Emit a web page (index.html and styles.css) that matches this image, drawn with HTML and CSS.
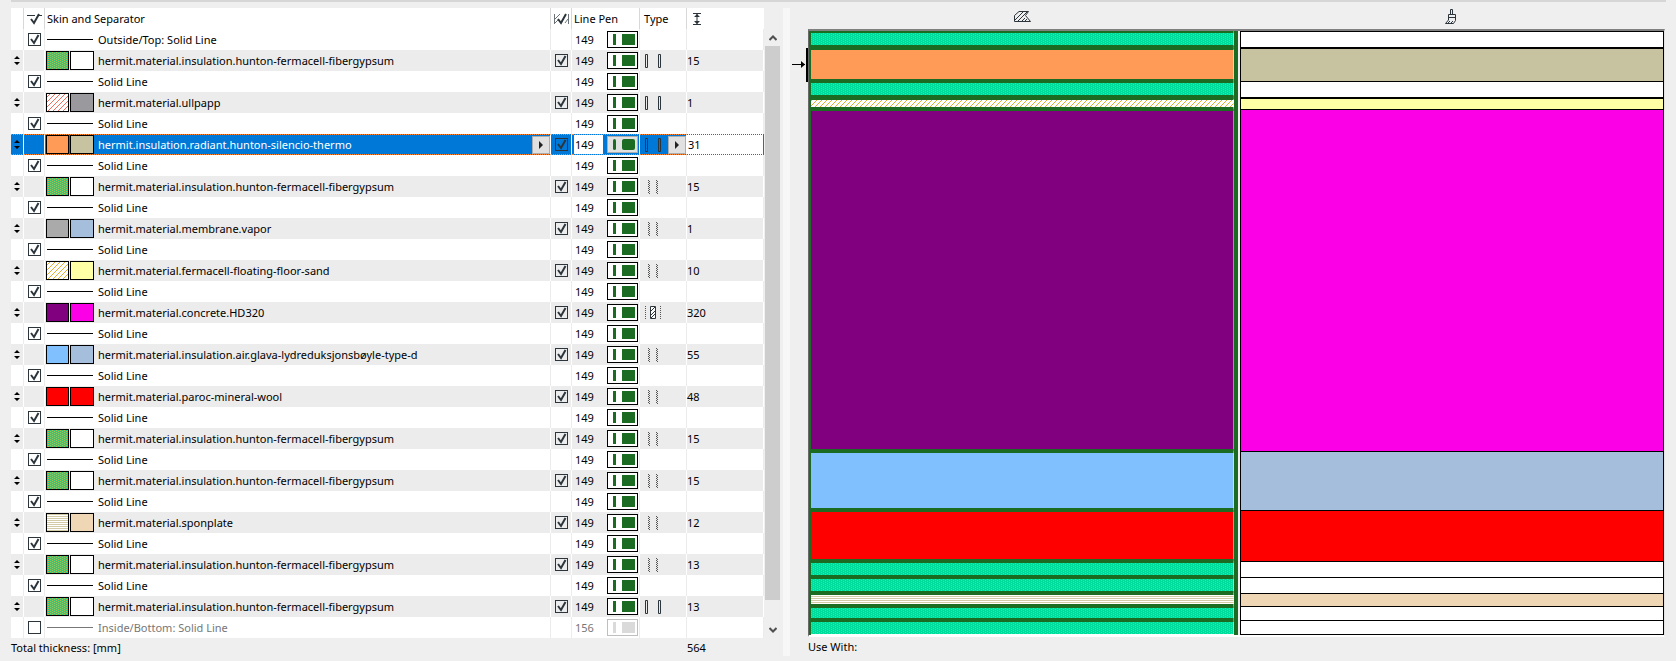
FILE: index.html
```html
<!DOCTYPE html>
<html lang="en">
<head>
    <meta charset="UTF-8">
    <meta name="viewport" content="width=device-width, initial-scale=1.0">
    <title>Composite Structures</title>
    <link rel="stylesheet" href="styles.css">
</head>
<body>
    <div class="divider"></div>
    <main class="editor">
        <section class="skins">
            <div class="list">
                <table class="skin-table">
                    <colgroup>
                        <col class="col-drag">
                        <col class="col-check">
                        <col>
                        <col class="col-end">
                        <col class="col-pen">
                        <col class="col-type">
                        <col class="col-thick">
                    </colgroup>
                    <thead>
                        <tr>
                            <th></th>
                            <th>
                                <svg width="15" height="12" viewBox="0 0 15 12" role="img" aria-label="Show separator"><path d="M0 2.5h8M12 2.5h3" stroke="#2b353b"/><path d="M4 6l3 4 5-9" fill="none" stroke="#2b353b" stroke-width="2"/></svg>
                            </th>
                            <th class="left">Skin and Separator</th>
                            <th>
                                <svg width="15" height="12" viewBox="0 0 15 12" role="img" aria-label="End faces"><path d="M.5 1v10M14.5 1v10M1 6l5-5M1 10l3-3M11 10l3-4" stroke="#6b7378" fill="none"/><path d="M4 6l3 4 5-9" fill="none" stroke="#2b353b" stroke-width="2"/></svg>
                            </th>
                            <th class="left">Line Pen</th>
                            <th class="left head-type">Type</th>
                            <th class="left head-thick">
                                <svg width="8" height="12" viewBox="0 0 8 12" role="img" aria-label="Thickness"><path d="M0 .5h8M0 11.5h8M4 1v10" stroke="#2b353b"/><path d="M4 1l3 3H1zM4 11l3-3H1z" fill="#2b353b"/></svg>
                            </th>
                        </tr>
                    </thead>
                    <tbody id="rows"></tbody>
                </table>
                <div class="scrollbar">
                    <button aria-label="Scroll up"><svg width="8" height="6" viewBox="0 0 8 6"><path d="M.5 5L4 1.500 7.500 5" fill="none" stroke="#505050" stroke-width="2"/></svg></button>
                    <div class="thumb"></div>
                    <button aria-label="Scroll down"><svg width="8" height="6" viewBox="0 0 8 6"><path d="M.5 1L4 4.500 7.500 1" fill="none" stroke="#505050" stroke-width="2"/></svg></button>
                </div>
            </div>
            <div class="total">
                <span>Total thickness: [mm]</span>
                <output id="total"></output>
            </div>
        </section>
        <div class="splitter"></div>
        <section class="preview">
            <div class="preview-head">
                <svg width="17" height="11" viewBox="0 0 17 11" role="img" aria-label="Cut fill"><path d="M5 .5h9.500l-3 4 5 6H.5v-6z" fill="none" stroke="#2b353b"/><path d="M1 9l8-8M4 10l9-9M8 10l3-3M11 10l2-2" stroke="#2b353b"/></svg>
                <svg width="12" height="15" viewBox="0 0 12 15" role="img" aria-label="Surface"><path d="M5.500 5V.5h2V5M3.500 11V5.500h7v6l-2 3H.5l3-3.500M3.500 8.500h7M3 14l2-2M6 14l2-2" fill="none" stroke="#2b353b"/></svg>
            </div>
            <div class="canvas">
                <svg class="section" id="cut" role="img" aria-label="Cut fill preview">
                    <defs>
                        <pattern id="gypsum" width="4" height="2" patternUnits="userSpaceOnUse">
                            <rect width="4" height="2" fill="#00dc9b"/>
                            <rect width="1" height="1" fill="#dca834"/>
                            <rect x="2" y="1" width="1" height="1" fill="#dca834"/>
                        </pattern>
                        <pattern id="ullpapp" width="5" height="5" patternUnits="userSpaceOnUse">
                            <rect width="5" height="5" fill="#fff"/>
                            <path d="M0 4h1v1H0zM1 3h1v1H1zM2 2h1v1H2zM3 1h1v1H3zM4 0h1v1H4z" fill="#f26a5a"/>
                        </pattern>
                        <pattern id="sand" width="5" height="5" patternUnits="userSpaceOnUse">
                            <rect width="5" height="5" fill="#fff"/>
                            <path d="M0 4h1v1H0zM1 3h1v1H1zM2 2h1v1H2zM3 1h1v1H3zM4 0h1v1H4z" fill="#e5ab2e"/>
                        </pattern>
                        <pattern id="sponplate" width="2" height="2" patternUnits="userSpaceOnUse">
                            <rect width="2" height="2" fill="#fff"/>
                            <rect y="1" width="2" height="1" fill="#d3cba6"/>
                        </pattern>
                    </defs>
                </svg>
                <svg class="section" id="surface" role="img" aria-label="Surface preview"></svg>
                <svg class="pointer" width="16" height="34" viewBox="0 0 16 34" aria-hidden="true"><path d="M0 16.500h13" stroke="#000"/><path d="M9 13l4 3.500-4 3.500z"/><rect x="14" width="2" height="34"/></svg>
            </div>
            <div class="use-with">Use With:</div>
        </section>
    </main>

    <script>
        const GYPSUM = 'hermit.material.insulation.hunton-fermacell-fibergypsum';
        const SCALE = 1.07; // px per mm in the preview

        // name, cut fill, surface colour, thickness, type
        const skins = [
            [GYPSUM, 'url(#gypsum)', '#ffffff', 15, 'finish'],
            ['hermit.material.ullpapp', 'url(#ullpapp)', '#9a9a9e', 1, 'finish'],
            ['hermit.insulation.radiant.hunton-silencio-thermo', '#ff9a57', '#c7c3a1', 31, 'finish'],
            [GYPSUM, 'url(#gypsum)', '#ffffff', 15, 'other'],
            ['hermit.material.membrane.vapor', '#aaaaaa', '#a4bedc', 1, 'other'],
            ['hermit.material.fermacell-floating-floor-sand', 'url(#sand)', '#ffffa6', 10, 'other'],
            ['hermit.material.concrete.HD320', '#800080', '#fb00e6', 320, 'core'],
            ['hermit.material.insulation.air.glava-lydreduksjonsbøyle-type-d', '#80c0ff', '#a4bedc', 55, 'other'],
            ['hermit.material.paroc-mineral-wool', '#ff0000', '#ff0000', 48, 'other'],
            [GYPSUM, 'url(#gypsum)', '#ffffff', 15, 'other'],
            [GYPSUM, 'url(#gypsum)', '#ffffff', 15, 'other'],
            ['hermit.material.sponplate', 'url(#sponplate)', '#efd7b6', 12, 'other'],
            [GYPSUM, 'url(#gypsum)', '#ffffff', 13, 'other'],
            [GYPSUM, 'url(#gypsum)', '#ffffff', 13, 'finish']
        ];
        const selected = 2;

        const typeIcons = {
            finish: '<path d="M.5 .5h2v13h-2zM13.500 .5h2v13h-2z" fill="none" stroke="#2b353b"/>',
            other: '<path d="M3.500 0v14M11.500 0v14" stroke="#555" stroke-dasharray="1 1"/><path d="M4.500 1v13M12.500 1v13" stroke="#555" stroke-dasharray="1 1"/>',
            core: '<path d="M.5 0v14M15.500 0v14" stroke="#555" stroke-dasharray="1 1"/><path d="M5.500 .5h5v12h-5z" fill="#fff" stroke="#2b353b"/><path d="M6 5l4-4M6 9l4-4M6 12l4-4" stroke="#2b353b"/>'
        };
        const arrow = '<svg width="4" height="8" viewBox="0 0 4 8"><path d="M0 0l4 4-4 4z" fill="#222"/></svg>';

        function penCell(number) {
            return `<div class="pen"><span>${number}</span><button class="pen-swatch" aria-label="Pen ${number}"><i class="pen-line"></i><i class="pen-block"></i></button></div>`;
        }

        function separatorRow(label, pen, on) {
            return `<tr class="${on ? '' : 'off'}">
                <td></td>
                <td><input type="checkbox" aria-label="${label}" ${on ? 'checked' : ''}></td>
                <td><div class="name"><i class="line"></i><span>${label}</span></div></td>
                <td></td>
                <td>${penCell(pen)}</td>
                <td></td>
                <td></td>
            </tr>`;
        }

        function skinRow([name, cut, surface, thickness, type], active) {
            const more = active ? `<button class="more" aria-label="Choose">${arrow}</button>` : '';
            const pen = active ? penCell(149).replace('<span>149</span>', '<input class="pen-input" aria-label="Pen" value="149">') : penCell(149);
            const value = active ? `<input class="thick-input" aria-label="Thickness" value="${thickness}">` : thickness;
            return `<tr class="skin ${active ? 'selected' : ''}">
                <td><svg width="6" height="9" viewBox="0 0 6 9"><path d="M3 0l3 3H0zM3 9l3-3H0z"/></svg></td>
                <td></td>
                <td><div class="name">
                    <svg width="48" height="19" viewBox="0 0 48 19"><rect x=".5" y=".5" width="22" height="18" fill="${cut}" stroke="#000"/><rect x="24.500" y=".5" width="23" height="18" fill="${surface}" stroke="#000"/></svg>
                    <span>${name}</span>${more}
                </div></td>
                <td><input type="checkbox" aria-label="End face" checked></td>
                <td>${pen}</td>
                <td><div class="type"><svg width="16" height="14" viewBox="0 0 16 14">${typeIcons[type]}</svg>${more}</div></td>
                <td class="thick">${value}</td>
            </tr>`;
        }

        let html = separatorRow('Outside/Top: Solid Line', 149, true);
        skins.forEach((skin, i) => {
            html += skinRow(skin, i === selected);
            html += i < skins.length - 1
                ? separatorRow('Solid Line', 149, true)
                : separatorRow('Inside/Bottom: Solid Line', 156, false);
        });
        document.getElementById('rows').innerHTML = html;

        // preview sections
        let fills = '', cutLines = '', surfaces = '', mm = 0;
        skins.forEach(([, cut, surface, thickness]) => {
            const top = Math.floor(mm * SCALE);
            mm += thickness;
            const height = Math.floor(mm * SCALE) - top;
            fills += `<rect y="${top}" width="100%" height="${height}" fill="${cut}"/>`;
            cutLines += `<rect y="${top - 2}" width="100%" height="4" fill="#1b6b22"/>`;
            surfaces += `<rect y="${top}" width="100%" height="${height}" fill="${surface}"/><rect y="${top}" width="100%" height="1"/>`;
        });
        // closing line under the last skin
        surfaces += `<rect y="${Math.floor(mm * SCALE)}" width="100%" height="1"/>`;
        document.getElementById('cut').insertAdjacentHTML('beforeend', fills + cutLines);
        document.getElementById('surface').innerHTML = surfaces;
        document.getElementById('total').textContent = mm;
    </script>
</body>
</html>
```

FILE: styles.css
```css
* {
    box-sizing: border-box;
}
body {
    margin: 0;
    background: #efefef;
    color: #000;
    font-family: "Noto Sans", "Open Sans", sans-serif;
    font-size: 11px;
    line-height: 16px;
}
button, input {
    margin: 0;
    padding: 0;
    border: 0;
    font: inherit;
    color: inherit;
}
svg {
    display: block;
    shape-rendering: auto;
}
pattern {
    shape-rendering: crispEdges;
}
.divider {
    height: 2px;
    margin: 0 10px 6px 11px;
    background: #d6d6d6;
}
.editor {
    display: flex;
}

/* left side */
.skins {
    flex: 772 1 0;
    min-width: 0;
    padding-left: 11px;
}
.list {
    display: flex;
    padding-right: 3px;
}
.skin-table {
    flex: 1;
    width: 0;
    table-layout: fixed;
    border-collapse: separate;
    border-spacing: 0;
    background: #fff;
}
.col-drag { width: 13px; }
.col-check { width: 21px; }
.col-end { width: 21px; }
.col-pen { width: 68px; }
.col-type { width: 47px; }
.col-thick { width: 77px; }
th, td {
    height: 21px;
    padding: 0;
    border-right: 1px solid #ececec;
    font-weight: normal;
    text-align: left;
    white-space: nowrap;
}
th {
    border-color: #d8d8d8;
}
th svg, td > svg, td > input[type="checkbox"] {
    display: block;
    margin: 0 auto;
}
th.left {
    padding-left: 2px;
}
th.head-type {
    padding-left: 4px;
}
.head-thick svg {
    margin: 0 0 0 4px;
}
th:last-child {
    border-color: #fff;
}
.skin td {
    background: #ececec;
    border-color: #fff;
}
input[type="checkbox"] {
    appearance: none;
    width: 13px;
    height: 13px;
    border: 1px solid #2b353b;
    background: transparent;
}
input[type="checkbox"]:checked {
    background: url("data:image/svg+xml,%3Csvg xmlns='http://www.w3.org/2000/svg' width='11' height='11'%3E%3Cpath d='M2 5l3 4 4.500-8' fill='none' stroke='%232b353b' stroke-width='2'/%3E%3C/svg%3E");
}
.name {
    display: flex;
    align-items: center;
    height: 19px;
    padding-left: 1px;
}
.name span {
    flex: 1;
    padding-left: 4px;
}
.line {
    width: 46px;
    height: 1px;
    margin: 0 1px;
    background: #000;
}
.pen {
    display: flex;
    align-items: center;
    justify-content: space-between;
    height: 19px;
    padding: 0 1px 0 3px;
}
.pen-swatch {
    display: flex;
    align-items: center;
    justify-content: space-between;
    width: 31px;
    height: 17px;
    padding: 0 2px 0 5px;
    border: 1px solid #000;
    background: #fff;
}
.pen-line, .pen-block {
    width: 3px;
    height: 11px;
    background: #1b6b22;
}
.pen-block {
    width: 13px;
}
.type {
    display: flex;
    align-items: center;
    justify-content: space-between;
    height: 19px;
    padding-left: 5px;
}
.more {
    display: flex;
    align-items: center;
    justify-content: center;
    width: 18px;
    height: 18px;
    border: 1px solid #adadad;
    background: #e1e1e1;
}
.off {
    color: #777;
}
.off .line {
    background: #777;
}
.off .pen-swatch {
    border-color: #bfbfbf;
}
.off .pen-line, .off .pen-block {
    background: #dadada;
}

/* selected row */
.skin.selected td {
    background: #0078d7;
    border-top: 1px dotted #ff8728;
    border-bottom: 1px dotted #ff8728;
}
.selected .name span {
    color: #fff;
}
.selected .pen {
    padding-left: 2px;
}
.pen-input {
    width: 29px;
    height: 19px;
    padding-left: 1px;
    background: #fff;
}
.selected .pen-swatch {
    border-color: #adadad;
    background: #e1e1e1;
}
.selected .pen-line, .selected .pen-block {
    border-radius: 2px;
}
.skin.selected .thick {
    border-top-color: #0078d7;
    border-bottom-color: #0078d7;
    border-right: 1px solid #0078d7;
    background: #fff;
}
.thick-input {
    display: block;
    width: 100%;
    height: 19px;
    padding-left: 1px;
    background: #fff;
}

.scrollbar {
    display: flex;
    flex-direction: column;
    width: 15px;
    margin: 21px 0 0 1px;
}
.scrollbar button {
    display: flex;
    align-items: center;
    justify-content: center;
    height: 17px;
    background: none;
}
.thumb {
    flex: 1;
    margin-bottom: 21px;
    background: #cdcdcd;
}
.total {
    display: flex;
    justify-content: space-between;
    padding-top: 2px;
}
.total output {
    width: 96px;
}

.splitter {
    width: 7px;
    background: #f7f7f7;
}

/* right side */
.preview {
    flex: 857 1 0;
    min-width: 0;
    padding: 0 11px 0 18px;
}
.preview-head {
    display: grid;
    grid-template-columns: 1fr 1fr;
    align-items: center;
    justify-items: center;
    height: 17px;
    margin-bottom: 4px;
}
.canvas {
    position: relative;
    display: flex;
    gap: 2px;
    border: 1px solid #696969;
    border-top: 2px solid #808080;
    border-right-color: #e3e3e3;
    border-bottom: 2px solid #fff;
}
.section {
    flex: 1;
    width: 0;
    height: 604px;
    background: #fff;
}
#cut {
    border: solid #1b6b22;
    border-width: 0 4px 0 2px;
}
#surface {
    border: 1px solid #000;
    border-top: 0;
}
.pointer {
    position: absolute;
    top: 17px;
    left: -17px;
}
.use-with {
    padding-top: 2px;
}
```
